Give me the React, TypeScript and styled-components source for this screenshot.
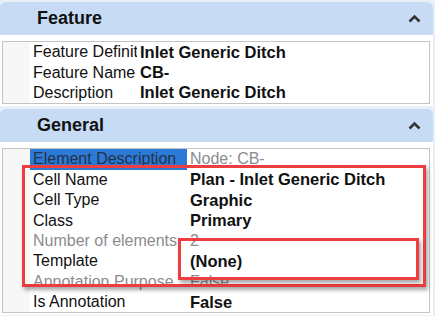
import React from 'react'
import styled, { createGlobalStyle } from 'styled-components'

const GlobalStyle = createGlobalStyle`
  html, body {
    margin: 0;
    padding: 0;
    background: #e9eff7;
    font-family: "Liberation Sans", Arial, sans-serif;
  }
`

const Page = styled.div`
  width: 435px;
  height: 316px;
  padding: 2px 2px 0 0;
  box-sizing: border-box;
  display: flex;
  flex-direction: column;
  gap: 3px;
  overflow: hidden;
`

const Section = styled.section`
  display: flex;
  flex-direction: column;
`

const Header = styled.div`
  height: 33px;
  background: #c7dcf4;
  border-radius: 6px 6px 0 0;
  display: flex;
  align-items: center;
  justify-content: space-between;
  padding: 0 12px 0 37px;
  font-size: 18px;
  font-weight: bold;
  color: #111;
`

const Body = styled.div`
  background: #fff;
  padding: 6px 3px 2px 2px;
  border-left: 1px solid #dfe5ec;
  margin-left: -1px;
`

const Grid = styled.div`
  position: relative;
  border: 1px solid #c4c4c4;
  background: #fff;
`

const Row = styled.div<{ $label: number }>`
  display: grid;
  grid-template-columns: 27px ${({ $label }) => $label}px 1fr;
  height: 20.4px;
  align-items: center;
  font-size: 16px;
  white-space: nowrap;
`

const Gutter = styled.div`
  height: 100%;
  background: #f7f7f7;
`

const Label = styled.div<{ $muted?: boolean; $selected?: boolean }>`
  height: 100%;
  display: flex;
  align-items: center;
  padding-left: 3px;
  overflow: hidden;
  color: ${({ $muted, $selected }) => ($selected ? '#24324a' : $muted ? '#8c8c8c' : '#111')};
  background: ${({ $selected }) => ($selected ? '#2b7ad6' : 'transparent')};
`

const Value = styled.div<{ $muted?: boolean }>`
  padding-left: 3px;
  color: ${({ $muted }) => ($muted ? '#8c8c8c' : '#111')};
  font-weight: ${({ $muted }) => ($muted ? 'normal' : 'bold')};
  font-size: ${({ $muted }) => ($muted ? 16 : 16.5)}px;
`

const Frame = styled.div`
  position: absolute;
  border: 3px solid #ee3d40;
  box-shadow: 2px 3px 4px rgba(0, 0, 0, 0.35);
  box-sizing: border-box;
  pointer-events: none;
`

const Chevron = () => (
	<svg width="13" height="9" viewBox="0 0 13 9">
		<polyline points="1.5,7.5 6.5,2.5 11.5,7.5" fill="none" stroke="#333" strokeWidth="2.6" />
	</svg>
)

type Prop = { label: string; value: string; muted?: boolean; selected?: boolean }

const featureRows: Prop[] = [
	{ label: 'Feature Definition', value: 'Inlet Generic Ditch' },
	{ label: 'Feature Name', value: 'CB-' },
	{ label: 'Description', value: 'Inlet Generic Ditch' },
]

const generalRows: Prop[] = [
	{ label: 'Element Description', value: 'Node: CB-', selected: true, muted: true },
	{ label: 'Cell Name', value: 'Plan - Inlet Generic Ditch' },
	{ label: 'Cell Type', value: 'Graphic' },
	{ label: 'Class', value: 'Primary' },
	{ label: 'Number of elements', value: '2', muted: true },
	{ label: 'Template', value: '(None)' },
	{ label: 'Annotation Purpose', value: 'False', muted: true },
	{ label: 'Is Annotation', value: 'False' },
]

const PropRow = ({ p, labelWidth }: { p: Prop; labelWidth: number }) => (
	<Row $label={labelWidth}>
		<Gutter />
		<Label $muted={p.muted} $selected={p.selected}>{p.label}</Label>
		<Value $muted={p.muted}>{p.value}</Value>
	</Row>
)

const App: React.FC = () => {
	return (
		<Page>
			<GlobalStyle />
			<Section>
				<Header>
					<span>Feature</span>
					<Chevron />
				</Header>
				<Body>
					<Grid>
						{featureRows.map(p => <PropRow key={p.label} p={p} labelWidth={107} />)}
					</Grid>
				</Body>
			</Section>
			<Section>
				<Header>
					<span>General</span>
					<Chevron />
				</Header>
				<Body>
					<Grid>
						{generalRows.map(p => <PropRow key={p.label} p={p} labelWidth={157} />)}
						{/* highlight callouts drawn over the list */}
						<Frame style={{ left: 19, top: 16, width: 404, height: 122 }} />
						<Frame style={{ left: 175, top: 89, width: 241, height: 42 }} />
					</Grid>
				</Body>
			</Section>
		</Page>
	)
}

export default App
